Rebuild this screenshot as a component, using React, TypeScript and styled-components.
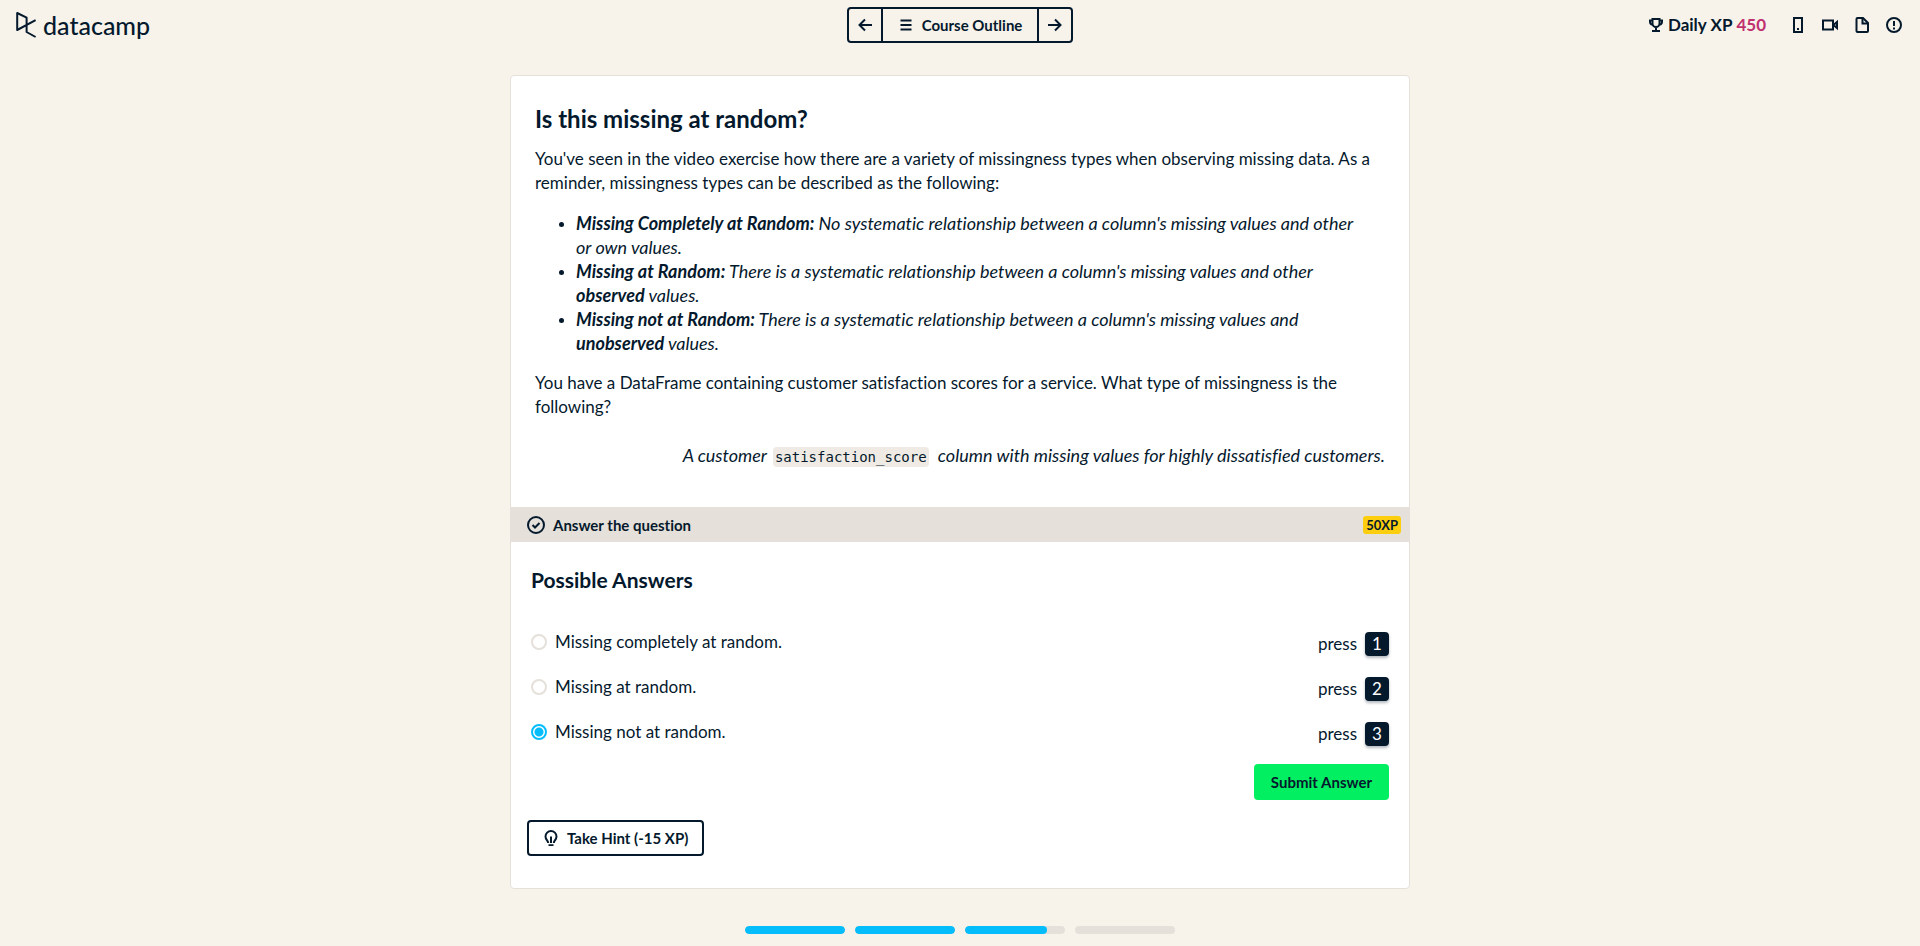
import React, { useState } from 'react';
import styled, { createGlobalStyle } from 'styled-components';

const navy = '#05192d';
const sand = '#f7f3eb';
const stone = '#e5e1da';
const blue = '#06bdfc';

const GlobalStyle = createGlobalStyle`
  *, *::before, *::after { box-sizing: border-box; }
  body {
    margin: 0;
    background: ${sand};
    color: ${navy};
    font: 400 17px/24px Lato, "Open Sans", sans-serif;
    font-variant-ligatures: none;
  }
  button { font-family: inherit; color: inherit; cursor: pointer; }
  h1, h2, p, ul, blockquote { margin: 0; padding: 0; }
`;

const Header = styled.header`
  display: grid;
  grid-template-columns: 1fr auto 1fr;
  align-items: center;
  padding: 7px 16px;
`;

const Logo = styled.a`
  justify-self: start;
  display: flex;
  align-items: center;
  gap: 6px;
  color: inherit;
  text-decoration: none;
`;

const LogoWord = styled.span`
  font-size: 25px;
  font-weight: 500;
  line-height: 36px;
`;

const OutlineNav = styled.nav`
  display: flex;
  height: 36px;
  border: 2px solid ${navy};
  border-radius: 4px;
`;

const NavButton = styled.button<{ $wide?: boolean }>`
  display: flex;
  align-items: center;
  justify-content: center;
  gap: 8px;
  width: ${p => (p.$wide ? '156px' : '32px')};
  padding: 0;
  border: 0;
  background: none;
  font-size: 15px;
  font-weight: 700;

  & + & { border-left: 2px solid ${navy}; }
  &:last-child { width: 34px; }
`;

const HeaderTools = styled.div`
  justify-self: end;
  display: flex;
  align-items: center;
  gap: 16px;
  padding-right: 2px;
`;

const DailyXp = styled.div`
  display: flex;
  align-items: center;
  gap: 4px;
  margin-right: 8px;
  font-weight: 700;
`;

const XpValue = styled.span`
  color: #c0306f;
`;

const IconButton = styled.button`
  display: flex;
  padding: 0;
  border: 0;
  background: none;
`;

const Main = styled.main`
  display: flex;
  flex-direction: column;
  align-items: center;
  gap: 37px;
  padding: 25px 16px 12px;
`;

const Card = styled.article`
  width: 100%;
  max-width: 900px;
  background: #fff;
  border: 1px solid ${stone};
  border-radius: 4px;
`;

const Assignment = styled.section`
  display: flex;
  flex-direction: column;
  gap: 16px;
  padding: 25px 24px 40px;
`;

const Title = styled.h1`
  margin-bottom: -6px;
  font-size: 24px;
  line-height: 36px;
  font-weight: 700;
`;

const TypeList = styled.ul`
  padding-left: 41px;
`;

const TypeItem = styled.li`
  font-size: 18px;
  font-style: italic;

  &::marker { font-size: 15px; }
`;

const Quote = styled.blockquote`
  margin-top: 8px;
  font-size: 18px;
  font-style: italic;
  text-align: right;
`;

const Code = styled.code`
  margin: 0 5px 0 2px;
  padding: 2px;
  border-radius: 4px;
  background: #efebe4;
  font: normal 14px/20px "DejaVu Sans Mono", monospace;
`;

const Band = styled.div`
  display: flex;
  align-items: center;
  gap: 8px;
  height: 35px;
  padding: 0 8px 0 16px;
  background: ${stone};
  font-size: 15px;
  font-weight: 700;
`;

const Badge = styled.span`
  margin-left: auto;
  padding: 0 3px;
  border-radius: 3px;
  background: #fcce0d;
  font-size: 13px;
  line-height: 18px;
`;

const Answers = styled.form`
  padding: 22px 20px 32px;
`;

const AnswersTitle = styled.h2`
  margin-bottom: 36px;
  font-size: 21px;
  line-height: 32px;
  font-weight: 700;
`;

const Options = styled.div`
  display: flex;
  flex-direction: column;
  gap: 21px;
`;

const OptionRow = styled.div`
  display: flex;
  justify-content: space-between;
  align-items: flex-start;
`;

const OptionLabel = styled.label`
  display: flex;
  align-items: center;
  gap: 8px;
  line-height: 20px;
`;

const Radio = styled.input`
  appearance: none;
  width: 16px;
  height: 16px;
  margin: 0;
  border: 2px solid ${stone};
  border-radius: 50%;
  background: #fff;

  &:checked {
    border-color: ${blue};
    background: radial-gradient(circle, ${blue} 4px, #fff 5px);
  }
`;

const Shortcut = styled.span`
  display: flex;
  align-items: center;
  gap: 8px;
`;

const Key = styled.kbd`
  width: 24px;
  border-radius: 4px;
  background: ${navy};
  box-shadow: 0 2px 3px rgba(5, 25, 45, 0.3);
  color: #fff;
  font: inherit;
  text-align: center;
`;

const Actions = styled.div`
  display: flex;
  justify-content: flex-end;
  margin: 18px 0 20px;
`;

const SubmitButton = styled.button`
  height: 36px;
  padding: 0 17px;
  border: 0;
  border-radius: 4px;
  background: #03ef62;
  font-size: 15px;
  font-weight: 700;
`;

const HintButton = styled.button`
  display: flex;
  align-items: center;
  gap: 8px;
  height: 36px;
  margin-left: -4px;
  padding: 0 14px;
  border: 2px solid ${navy};
  border-radius: 4px;
  background: #fff;
  font-size: 15px;
  font-weight: 700;
`;

const ProgressBar = styled.div`
  display: flex;
  gap: 10px;
`;

const Segment = styled.div`
  width: 100px;
  height: 8px;
  border-radius: 4px;
  background: ${stone};
  overflow: hidden;
`;

const SegmentFill = styled.div`
  height: 100%;
  border-radius: 4px;
  background: ${blue};
`;

const Icon = ({ size = 16, children }: { size?: number; children: React.ReactNode }) => (
  <svg width={size} height={size} viewBox={`0 0 ${size} ${size}`} fill="none" stroke="currentColor" strokeWidth="2" aria-hidden="true">
    {children}
  </svg>
);

const LogoMark = () => (
  <svg width="21" height="28" viewBox="0 0 21 28" fill="none" stroke="currentColor" strokeWidth="2" strokeLinejoin="round" aria-hidden="true">
    <path d="M19.6 9.2 1.2 19V2l9.4 4.7V21l9 5" />
  </svg>
);

const OPTIONS = ['Missing completely at random.', 'Missing at random.', 'Missing not at random.'];
const PROGRESS = [100, 100, 82, 0];

export default function App() {
  const [answer, setAnswer] = useState(2);

  return (
    <>
      <GlobalStyle />
      <Header>
        <Logo href="#" aria-label="datacamp">
          <LogoMark />
          <LogoWord>datacamp</LogoWord>
        </Logo>
        <OutlineNav aria-label="Course">
          <NavButton type="button" aria-label="Previous">
            <Icon><path d="M15 8H2M8 2.5 2.5 8 8 13.5" /></Icon>
          </NavButton>
          <NavButton type="button" $wide>
            <Icon><path d="M2.5 3.5h11M2.5 8h11M2.5 12.5h11" /></Icon>
            Course Outline
          </NavButton>
          <NavButton type="button" aria-label="Next">
            <Icon><path d="M1 8h13M8 2.5 13.5 8 8 13.5" /></Icon>
          </NavButton>
        </OutlineNav>
        <HeaderTools>
          <DailyXp>
            <Icon>
              <path d="M4.500 2h7v4.500a3.500 3.500 0 0 1-7 0zM4.500 3.500H2V5a2.600 2.600 0 0 0 2.800 2.600M11.500 3.500H14V5a2.600 2.600 0 0 1-2.800 2.600M8 10v4M4 14h8" />
            </Icon>
            Daily XP <XpValue>450</XpValue>
          </DailyXp>
          <IconButton type="button" aria-label="Mobile">
            <Icon><path d="M4 1h8v14H4z" /><path d="M7 12h2" /></Icon>
          </IconButton>
          <IconButton type="button" aria-label="Video">
            <Icon><path d="M1 3.500h10v9H1z" /><path d="m11.500 8 3.500-3v6z" /></Icon>
          </IconButton>
          <IconButton type="button" aria-label="Slides">
            <Icon><path d="M3.500 1H9l5 5v8a1 1 0 0 1-1 1H3.500a1 1 0 0 1-1-1V2a1 1 0 0 1 1-1z" /><path d="M8.500 1v5.500H14" /></Icon>
          </IconButton>
          <IconButton type="button" aria-label="Report an issue">
            <Icon><circle cx="8" cy="8" r="7" /><path d="M8 4v5M8 10.500v2" /></Icon>
          </IconButton>
        </HeaderTools>
      </Header>

      <Main>
        <Card>
          <Assignment>
            <Title>Is this missing at random?</Title>
            <p>
              You've seen in the video exercise how there are a variety of missingness types when
              observing missing data. As a reminder, missingness types can be described as the following:
            </p>
            <TypeList>
              <TypeItem>
                <strong>Missing Completely at Random:</strong> No systematic relationship between a
                column's missing values and other or{'\u00a0'}own values.
              </TypeItem>
              <TypeItem>
                <strong>Missing at Random:</strong> There is a systematic relationship between a
                column's missing values and other <strong>observed</strong> values.
              </TypeItem>
              <TypeItem>
                <strong>Missing not at Random:</strong> There is a systematic relationship between a
                column's missing values and <strong>unobserved</strong> values.
              </TypeItem>
            </TypeList>
            <p>
              You have a DataFrame containing customer satisfaction scores for a service. What type of
              missingness is the following?
            </p>
            <Quote>
              A customer <Code>satisfaction_score</Code> column with missing values for highly
              dissatisfied customers.
            </Quote>
          </Assignment>

          <Band>
            <Icon size={18}>
              <circle cx="9" cy="9" r="8" />
              <path d="m5.500 9 2.500 2.500L12.500 7" />
            </Icon>
            Answer the question
            <Badge>50XP</Badge>
          </Band>

          <Answers onSubmit={e => e.preventDefault()}>
            <AnswersTitle>Possible Answers</AnswersTitle>
            <Options role="radiogroup" aria-label="Possible Answers">
              {OPTIONS.map((text, i) => (
                <OptionRow key={text}>
                  <OptionLabel>
                    <Radio type="radio" name="answer" checked={answer === i} onChange={() => setAnswer(i)} />
                    {text}
                  </OptionLabel>
                  <Shortcut>
                    press <Key>{i + 1}</Key>
                  </Shortcut>
                </OptionRow>
              ))}
            </Options>
            <Actions>
              <SubmitButton type="submit">Submit Answer</SubmitButton>
            </Actions>
            <HintButton type="button">
              <Icon>
                <path d="M5.200 13C5 10.500 2.500 9.500 2.500 6.500a5.500 5.500 0 0 1 11 0c0 3-2.500 4-2.700 6.500M8 6.500V13M5.500 15.200h5" />
              </Icon>
              Take Hint (-15 XP)
            </HintButton>
          </Answers>
        </Card>

        <ProgressBar role="progressbar" aria-label="Chapter progress">
          {PROGRESS.map((value, i) => (
            <Segment key={i}>
              <SegmentFill style={{ width: `${value}%` }} />
            </Segment>
          ))}
        </ProgressBar>
      </Main>
    </>
  );
}
